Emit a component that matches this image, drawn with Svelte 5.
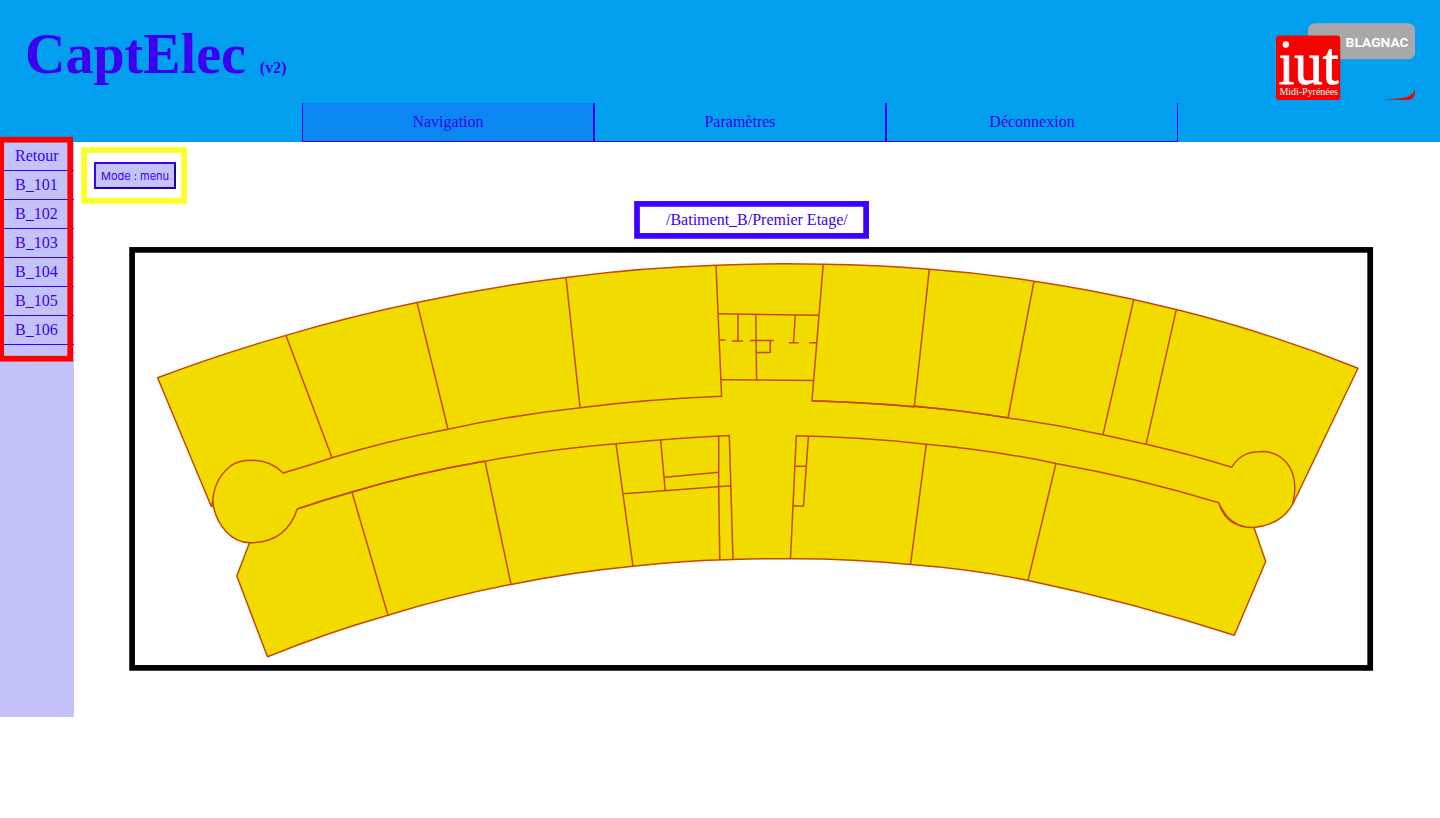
<script>
  const tabs = ['Navigation', 'Paramètres', 'Déconnexion'];
  const entries = ['Retour', 'B_101', 'B_102', 'B_103', 'B_104', 'B_105', 'B_106'];
  let active = $state('Navigation');

  const frames = [
    { x: 1.2, y: 139.7, w: 69, h: 219, color: '#ff0000' },
    { x: 84.2, y: 150, w: 100, h: 50.8, color: '#fbff26' },
    { x: 637, y: 203.9, w: 229.1, h: 32, color: '#3c00ff' },
    { x: 132.1, y: 249.9, w: 1238.1, h: 418, color: '#000000' }
  ];
</script>

<div class="page">
  <header>
    <div class="banner">
      <h1>CaptElec <small>(v2)</small></h1>
      <svg class="logo" width="140" height="78" viewBox="1276 23 140 78">
        <rect x="1308" y="23.3" width="107" height="36" rx="7" fill="#a6a8aa" />
        <rect x="1276" y="35.6" width="64.3" height="64.4" rx="3.6" fill="#f80000" />
        <path d="M1381 99.3C1404 98.6 1413.5 98 1415 88V92C1415 97.5 1411.5 100 1406.5 100Z" fill="#ed0000" />
        <circle cx="1285.8" cy="44.5" r="3.2" fill="#fff" />
        <text class="iut" x="1278.5" y="84" textLength="60" lengthAdjust="spacingAndGlyphs">ıut</text>
        <text class="region" x="1279.5" y="94.7" textLength="58.5">Midi-Pyrénées</text>
        <text class="town" x="1345.6" y="46.8" textLength="63" lengthAdjust="spacingAndGlyphs">BLAGNAC</text>
      </svg>
    </div>
    <nav>
      {#each tabs as tab}
        <a href="#top" class:active={active === tab} onclick={() => (active = tab)}>{tab}</a>
      {/each}
    </nav>
  </header>

  <div class="body">
    <aside>
      {#each entries as entry}
        <a href="#top">{entry}</a>
      {/each}
    </aside>
    <main>
      <button>Mode : menu</button>
      <p class="path">/Batiment_B/Premier Etage/</p>
      <svg class="plan" width="1233" height="413" viewBox="135 252 1233 413">
        <path d="M157.6 377.8Q220 354 286 335.4Q350 316.500 417 302.600Q491 286.500 566 277.500Q641 267.500 716 265.200Q770 263 823.200 264.200Q876 264.500 929.300 269.300Q982 273 1034 281.200Q1084 288.500 1133.700 299.600L1176.300 309.600Q1269 332.500 1358 368.200L1293.300 503C1286 517 1273 525.500 1254 527.500L1265.700 561.500L1234.300 635.300Q1132 602 1028 580.400Q970 569 910.500 564.600Q850 558.500 790.500 558.700Q761 558.500 733 559.500Q683 560.500 633 566.200Q572 572 511 584.400Q449 596.500 388 615.200Q327 632.500 267.500 656.800L236.800 576L249.500 542.700C230 542 217 524 213.500 506.500L211.300 506.500Z" />
        <path d="M211.300 506.500L212.600 502C213.500 487 220 475 229 467.300C237 460.500 246 460.300 254 460.300C267 460.600 276 466 283.200 473Q307 466 332 457.700Q390 440 448 429.200Q513 415 580 407.700Q650 399 721.600 396.300L716 265.200" />
        <path d="M213.500 506.500L212.600 500M249.500 542.700C275 543 290 531 297.300 509Q324 500 352 492.200Q417 472.500 485 461.300Q550 449 616 443.800Q672 438 729.300 435.400L733 559.500" />
        <path d="M297.300 509Q324 499.500 352 491.600Q417 473 485 461" />
        <path d="M823.200 264.200L812 400.700Q862 402.300 914.300 406.500Q961 410 1008 418Q1056 424.500 1103 434.700L1146 444.300Q1189 454 1231.700 467.300C1241 452 1253 451.500 1264 451.500C1284 453 1294 469 1294.700 485C1295 494 1294 499 1292.500 503" />
        <path d="M812 400.700Q862 402.300 914.300 406.900M914.300 406.100Q961 410.500 1008 417.700" />
        <path d="M790.500 558.700L796.300 435.800Q861 437 926.300 444.200Q992 450 1056 463.400Q1138 478 1218.700 502.700C1224 520 1236 528 1254 527.500M1218.700 502.700C1224.500 516 1232 524 1244 526.500" />
        <path d="M286 335.400L332 457.700M417 302.600L448 429.200M566 277.500L580 407.700M929.300 269.300L914.300 406.500M1034 281.200L1008 418M1133.700 299.600L1103 434.700M1176.300 309.600L1146 444.300" />
        <path d="M352 492.200L388 615.200M485 461.300L511 584.400M616 443.800L633 566.200M926.300 444.200L910.500 564.600M1056 463.400L1028 580.400" />
        <path d="M718 313.800L819 315.300M721 379.800L813.500 380.400M738 314V341M732 341H743M755.800 314.500L756.600 380M750 340.400H773.700M770.300 340.400V352.400H756M795.300 315L793.500 342.700M789 342.700H798.500M809.300 342.700H817M719 340H725.500" />
        <path d="M718.700 436V486.500L719.800 559.800M623.500 493.700L731 485.700M660.700 440.500L665.200 490.500M664.500 477.200L719 472.300" />
        <path d="M808.400 436.500L803.500 506H793M795 466.200H806.200" />
      </svg>
    </main>
  </div>

  <svg class="frames" width="1440" height="818" viewBox="0 0 1440 818">
    {#each frames as f}
      <rect x={f.x} y={f.y} width={f.w} height={f.h} stroke={f.color} />
    {/each}
  </svg>
</div>

<style>
  :global(body) {
    margin: 0;
    background: #fff;
  }
  .page {
    position: relative;
    width: 1440px;
    height: 818px;
    overflow: hidden;
    font: 16px/18px 'Liberation Serif', 'Times New Roman', serif;
    color: #3c00ee;
  }
  header {
    height: 142px;
    background: #029fef;
  }
  .banner {
    display: flex;
    justify-content: space-between;
    height: 103px;
    padding: 0 24px 0 25px;
  }
  h1 {
    margin: 22px 0 0;
    font-size: 56px;
    line-height: 64px;
  }
  small {
    font-size: 16px;
  }
  .logo {
    margin-top: 23px;
  }
  .logo text {
    fill: #fff;
  }
  .iut {
    font: 61px 'Liberation Serif', serif;
    stroke: #fff;
    stroke-width: 0.9;
  }
  .region {
    font: 10px 'Liberation Serif', serif;
  }
  .town {
    font: bold 13px Roboto, sans-serif;
  }
  nav {
    display: flex;
    padding-left: 302px;
  }
  nav a {
    box-sizing: border-box;
    width: 292px;
    height: 39px;
    border: solid #3c00ee;
    border-width: 0 1px 1px;
    line-height: 38px;
    text-align: center;
  }
  a {
    color: inherit;
    text-decoration: none;
  }
  nav a.active {
    background: #0a87f3;
  }
  .body {
    display: flex;
  }
  aside {
    width: 74px;
    height: 575px;
    background: #c3c2fb;
  }
  aside a {
    display: block;
    box-sizing: border-box;
    height: 29px;
    padding-left: 15px;
    border-bottom: 1px solid #3c00ee;
    line-height: 28px;
  }
  main {
    display: flex;
    flex-direction: column;
    align-items: flex-start;
    padding: 20px 0 0 20px;
  }
  button {
    box-sizing: border-box;
    width: 82px;
    height: 27px;
    padding: 1px 0 0;
    border: 2px solid;
    border-color: #3c00ff #24009c #24009c #3c00ff;
    background: #c3c2fb;
    color: #3c00ee;
    font: 11px Inter, sans-serif;
    white-space: nowrap;
  }
  .path {
    margin: 22px 0 23px 572px;
  }
  .plan {
    margin-left: 41px;
    fill: none;
    stroke: #c34a05;
    stroke-width: 1.5;
    stroke-linejoin: round;
  }
  .plan path:first-child {
    fill: #f2dc00;
  }
  .frames {
    position: absolute;
    inset: 0;
    fill: none;
    stroke-width: 5.7;
    pointer-events: none;
  }
</style>
